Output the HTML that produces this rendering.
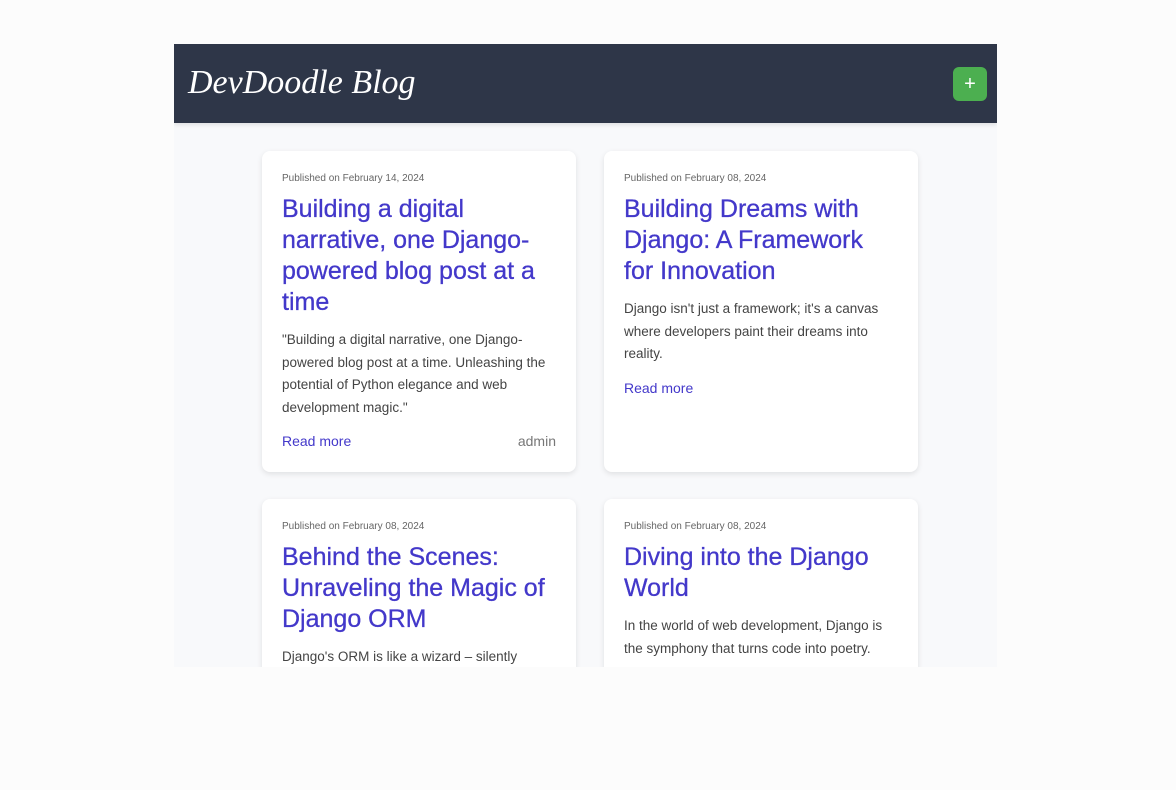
<!DOCTYPE html>
<html><head><style>
body{margin:0;background:#fcfcfc;font-family:"Liberation Sans",sans-serif;width:1176px;height:790px;overflow:hidden}
.wrap{position:absolute;left:174px;top:44px;width:823px;height:623px;background:#f8f9fb;overflow:hidden}
header{height:79px;background:#2e3648;position:relative;box-shadow:0 2px 4px rgba(0,0,0,.1)}
.logo{position:absolute;left:14px;top:20px;color:#fff;font-family:"Liberation Serif",serif;font-style:italic;font-size:34px}
.btn{position:absolute;left:779px;top:23px;width:34px;height:34px;background:#4caf50;border-radius:6px;color:#fff;font-size:20px;text-align:center;line-height:34px}
.card{position:absolute;width:274px;background:#fff;border-radius:8px;box-shadow:0 2px 6px rgba(0,0,0,.1);padding:20px}
.date{font-size:10px;color:#666;margin-top:2px}
h2{color:#4338ca;font-weight:normal;font-size:25px;line-height:31px;margin:10px 0 11px;-webkit-text-stroke:0.3px #4338ca}
p{font-size:13.5px;line-height:22.5px;color:#444;margin:0 0 14px}
.foot{font-size:14px;display:flex;justify-content:space-between}
.foot a{color:#4338ca;text-decoration:none}
.foot span{color:#777}
</style></head><body>
<div class="wrap">
<header><div class="logo">DevDoodle Blog</div><div class="btn">+</div></header>
<div class="card" style="left:88px;top:107px;height:281px">
<div class="date">Published on February 14, 2024</div>
<h2>Building a digital narrative, one Django-powered blog post at a time</h2>
<p>"Building a digital narrative, one Django-powered blog post at a time. Unleashing the potential of Python elegance and web development magic."</p>
<div class="foot"><a>Read more</a><span>admin</span></div></div>
<div class="card" style="left:430px;top:107px;height:281px">
<div class="date">Published on February 08, 2024</div>
<h2>Building Dreams with Django: A Framework for Innovation</h2>
<p>Django isn't just a framework; it's a canvas where developers paint their dreams into reality.</p>
<div class="foot"><a>Read more</a></div></div>
<div class="card" style="left:88px;top:455px;height:281px">
<div class="date">Published on February 08, 2024</div>
<h2>Behind the Scenes: Unraveling the Magic of Django ORM</h2>
<p>Django's ORM is like a wizard – silently</p></div>
<div class="card" style="left:430px;top:455px;height:281px">
<div class="date">Published on February 08, 2024</div>
<h2>Diving into the Django World</h2>
<p>In the world of web development, Django is the symphony that turns code into poetry.</p></div>
</div>
</body></html>
